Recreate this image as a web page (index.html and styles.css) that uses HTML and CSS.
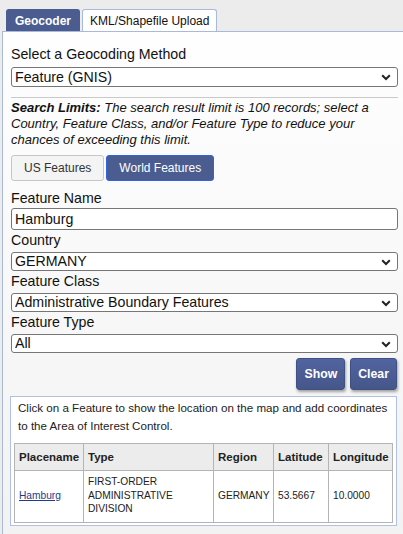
FILE: index.html
```
<!DOCTYPE html>
<html>
<head>
<meta charset="utf-8">
<link rel="stylesheet" href="styles.css">
</head>
<body>
<div class="tabs">
  <div class="tab tab-active">Geocoder</div>
  <div class="tab">KML/Shapefile Upload</div>
</div>
<div class="panel">
  <label class="lbl lbl-first">Select a Geocoding Method</label>
  <div class="sel sel-method">
    <select><option>Feature (GNIS)</option></select>
    <svg class="chev" width="10" height="7" viewBox="0 0 10 7"><path d="M1.2 1.3 L5 5 L8.8 1.3" fill="none" stroke="#222" stroke-width="2"/></svg>
  </div>
  <hr class="rule">
  <p class="limits"><b>Search Limits:</b> The search result limit is 100 records; select a Country, Feature Class, and/or Feature Type to reduce your chances of exceeding this limit.</p>
  <div class="toggle">
    <button class="tbtn">US Features</button>
    <button class="tbtn tbtn-on">World Features</button>
  </div>
  <label class="lbl lbl-name">Feature Name</label>
  <input class="txt" type="text" value="Hamburg">
  <label class="lbl">Country</label>
  <div class="sel">
    <select><option>GERMANY</option></select>
    <svg class="chev" width="10" height="7" viewBox="0 0 10 7"><path d="M1.2 1.3 L5 5 L8.8 1.3" fill="none" stroke="#222" stroke-width="2"/></svg>
  </div>
  <label class="lbl">Feature Class</label>
  <div class="sel">
    <select><option>Administrative Boundary Features</option></select>
    <svg class="chev" width="10" height="7" viewBox="0 0 10 7"><path d="M1.2 1.3 L5 5 L8.8 1.3" fill="none" stroke="#222" stroke-width="2"/></svg>
  </div>
  <label class="lbl">Feature Type</label>
  <div class="sel">
    <select><option>All</option></select>
    <svg class="chev" width="10" height="7" viewBox="0 0 10 7"><path d="M1.2 1.3 L5 5 L8.8 1.3" fill="none" stroke="#222" stroke-width="2"/></svg>
  </div>
  <div class="actions">
    <button class="abtn">Show</button>
    <button class="abtn">Clear</button>
  </div>
  <div class="results">
    <p class="hint">Click on a Feature to show the location on the map and add coordinates to the Area of Interest Control.</p>
    <table class="grid">
      <colgroup>
        <col class="c1"><col class="c2"><col class="c3"><col class="c4"><col class="c5">
      </colgroup>
      <thead>
        <tr><th>Placename</th><th>Type</th><th>Region</th><th>Latitude</th><th>Longitude</th></tr>
      </thead>
      <tbody>
        <tr><td><a href="#">Hamburg</a></td><td>FIRST-ORDER ADMINISTRATIVE DIVISION</td><td>GERMANY</td><td>53.5667</td><td>10.0000</td></tr>
      </tbody>
    </table>
  </div>
</div>
</body>
</html>
```
FILE: styles.css
```
html, body {
  margin: 0;
  padding: 0;
}
body {
  background: #ececec;
  font-family: "Liberation Sans", Arial, sans-serif;
  color: #111;
  width: 403px;
  height: 534px;
  overflow: hidden;
}
.tabs {
  display: flex;
  gap: 2px;
  padding: 9px 0 0 6px;
  height: 22px;
}
.tab {
  height: 22px;
  line-height: 22px;
  padding: 0 7px;
  font-size: 12px;
  border: 1px solid #a9b9d9;
  border-bottom: none;
  border-radius: 3px 3px 0 0;
  background: #fff;
  color: #111;
  box-sizing: border-box;
}
.tab-active {
  background: #4b5d90;
  border-color: #4b5d90;
  color: #fff;
  font-weight: bold;
  padding: 0 8px;
}
.panel {
  margin-left: 2px;
  border-top: 1px solid #a9b9d9;
  border-left: 1px solid #a9b9d9;
  background: linear-gradient(#fefefe, #f2f2f2);
  padding: 13px 5px 20px 8px;
  height: 520px;
  box-sizing: border-box;
}
.lbl {
  display: block;
  font-size: 14.2px;
  line-height: 17px;
  margin-top: 2px;
  color: #111;
}
.lbl-first {
  margin-top: 0;
  line-height: 18px;
  margin-bottom: 4px;
}
.lbl-name {
  margin-top: 9px;
}
.sel {
  position: relative;
  margin-top: 3px;
}
.sel select {
  display: block;
  width: 100%;
  height: 19px;
  appearance: none;
  -webkit-appearance: none;
  border: 1px solid #767676;
  border-radius: 3px;
  background: #fff;
  font-family: "Liberation Sans", Arial, sans-serif;
  font-size: 14.2px;
  color: #111;
  padding: 0 3px;
  margin: 0;
  box-sizing: border-box;
  line-height: 17px;
}
.sel-method {
  margin-top: 0;
}
.sel-method select {
  height: 20px;
}
.chev {
  position: absolute;
  right: 7px;
  top: 50%;
  margin-top: -3px;
}
.rule {
  border: none;
  border-top: 1px solid #c9c9c9;
  margin: 10px 0 0 0;
  height: 0;
}
.limits {
  margin: 2px 0 0 0;
  font-size: 13px;
  line-height: 16px;
  font-style: italic;
  color: #111;
}
.toggle {
  display: flex;
  gap: 2px;
  margin-top: 7px;
}
.tbtn {
  height: 26px;
  padding: 0 12px;
  font-family: "Liberation Sans", Arial, sans-serif;
  font-size: 12px;
  border: 1px solid #c6c6c6;
  border-radius: 3px;
  background: #f4f4f4;
  color: #333;
  margin: 0;
}
.tbtn-on {
  background: #4b5d90;
  border-color: #3162e0;
  color: #fff;
}
.txt {
  display: block;
  width: 100%;
  height: 22px;
  box-sizing: border-box;
  border: 1px solid #767676;
  border-radius: 3px;
  font-family: "Liberation Sans", Arial, sans-serif;
  font-size: 14.2px;
  padding: 0 3px;
  margin: 1px 0 0 0;
  color: #111;
  background: #fff;
}
.actions {
  display: flex;
  justify-content: flex-end;
  gap: 5px;
  margin-top: 5px;
  padding-right: 1px;
}
.abtn {
  height: 32px;
  padding: 0 7px;
  font-family: "Liberation Sans", Arial, sans-serif;
  font-size: 12.3px;
  font-weight: bold;
  color: #fff;
  border: 1px solid #3f5083;
  border-radius: 3px;
  background: linear-gradient(#5264a0, #45568a);
  box-shadow: 1px 2px 3px rgba(0, 0, 0, 0.35);
  margin: 0;
}
.results {
  margin: 6px 1px 0 -1px;
  border: 1px solid #aec1e4;
  background: #fff;
  padding: 2px 3px 2px 3px;
}
.hint {
  margin: 0 0 8px 0;
  padding-left: 4px;
  font-size: 11.6px;
  line-height: 18px;
  color: #222;
}
.grid {
  width: 100%;
  border-collapse: collapse;
  table-layout: fixed;
  border: 1px solid #a8a8a8;
}
.c1 { width: 69px; }
.c2 { width: 130px; }
.c3 { width: 60px; }
.c4 { width: 55px; }
.c5 { width: auto; }
.grid th {
  background: #ececec;
  font-size: 11.5px;
  font-weight: bold;
  text-align: left;
  padding: 6px 4px;
  height: 14px;
  border: 1px solid #b4b4b4;
  color: #222;
  white-space: nowrap;
}
.grid td {
  font-size: 10.2px;
  line-height: 13.5px;
  padding: 4px 4px 6px 4px;
  border: 1px solid #b4b4b4;
  vertical-align: middle;
  color: #222;
}
.grid a {
  color: #1c3c8c;
}
```
